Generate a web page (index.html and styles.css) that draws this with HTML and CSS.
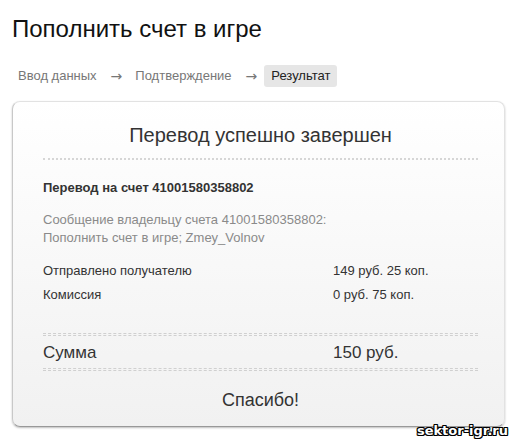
FILE: index.html
```html
<!DOCTYPE html>
<html lang="ru">
  <head>
    <meta charset="UTF-8" />
    <title>Пополнить счет в игре</title>
    <link rel="stylesheet" href="styles.css">
  </head>
  <body>
    <h1 class="page-title">Пополнить счет в игре</h1>

    <div class="steps">
      <span class="step">Ввод данных</span>
      <span class="arrow">&rarr;</span>
      <span class="step">Подтверждение</span>
      <span class="arrow">&rarr;</span>
      <span class="step current">Результат</span>
    </div>

    <div class="result-card">
      <h2 class="result-title">Перевод успешно завершен</h2>
      <div class="dots"></div>

      <p class="account">Перевод на счет 41001580358802</p>

      <p class="message">
        Сообщение владельцу счета 41001580358802:<br />
        Пополнить счет в игре; Zmey_Volnov
      </p>

      <div class="rows">
        <span>Отправлено получателю</span>
        <span>149 руб. 25 коп.</span>
        <span>Комиссия</span>
        <span>0 руб. 75 коп.</span>
      </div>

      <div class="double-line"></div>
      <div class="rows total">
        <span>Сумма</span>
        <span>150 руб.</span>
      </div>
      <div class="double-line"></div>

      <p class="thanks">Спасибо!</p>
    </div>

    <div class="watermark">sektor-igr.ru</div>
  </body>
</html>
```

FILE: styles.css
```css
body {
  font-family: Arial, "Liberation Sans", sans-serif;
  margin: 0;
  padding: 0 3px 0 12px;
  background: #fff;
  color: #222;
  position: relative;
  height: 440px;
  overflow: hidden;
}
.page-title {
  font-size: 24px;
  font-weight: normal;
  line-height: 26px;
  margin: 0;
  padding-top: 16px;
  color: #111;
}
.steps {
  display: flex;
  align-items: center;
  margin-top: 23px;
  font-size: 13px;
  color: #777;
  height: 22px;
}
.step {
  padding: 0 6px;
  line-height: 22px;
}
.step.current {
  padding: 0 7px;
  background-color: #e6e6e6;
  border-radius: 3px;
  color: #222;
}
.arrow {
  font-family: "DejaVu Sans", sans-serif;
  font-size: 14px;
  margin: 0 7px 0 8px;
  color: #777;
}
.result-card {
  margin-top: 14px;
  width: 493px;
  height: 326px;
  box-sizing: border-box;
  border: 1px solid #e2e2e2;
  border-left-color: #c8c8c8;
  border-bottom-color: #999;
  border-radius: 8px;
  background: linear-gradient(#fff, #f1f1f1);
  box-shadow: 0 1px 2px rgba(0, 0, 0, 0.25);
  padding: 0 26px 0 30px;
}
.result-title {
  font-size: 20px;
  font-weight: normal;
  text-align: center;
  color: #333;
  margin: 0;
  padding-top: 20px;
  line-height: 26px;
}
.dots {
  margin-top: 10px;
  border-top: 2px dotted #d6d6d6;
}
.account {
  font-size: 13px;
  font-weight: bold;
  color: #333;
  margin: 20px 0 0;
  line-height: 16px;
}
.message {
  font-size: 13px;
  color: #8a8a8a;
  margin: 15px 0 0;
  line-height: 18px;
}
.rows {
  display: grid;
  grid-template-columns: 290px 1fr;
  row-gap: 8px;
  font-size: 13px;
  color: #333;
  line-height: 16px;
  margin-top: 16px;
}
.rows.total {
  font-size: 17px;
  line-height: 20px;
  margin-top: 7px;
  margin-bottom: 5px;
}
.double-line {
  height: 1px;
  border-top: 1px dashed #d0d0d0;
  border-bottom: 1px dashed #d0d0d0;
}
.rows + .double-line {
  margin-top: 30px;
}
.total + .double-line {
  margin-top: 0;
}
.thanks {
  text-align: center;
  font-size: 18px;
  color: #333;
  margin: 18px 0 0;
  line-height: 22px;
}
.watermark {
  position: absolute;
  right: 2px;
  bottom: 2px;
  font-family: "DejaVu Sans", sans-serif;
  font-weight: bold;
  font-size: 13px;
  color: #fff;
  text-shadow: -1px -1px 0 #000, 1px -1px 0 #000, -1px 1px 0 #000, 1px 1px 0 #000, 0 1px 0 #000, 0 -1px 0 #000, 1px 0 0 #000, -1px 0 0 #000;
}
```
